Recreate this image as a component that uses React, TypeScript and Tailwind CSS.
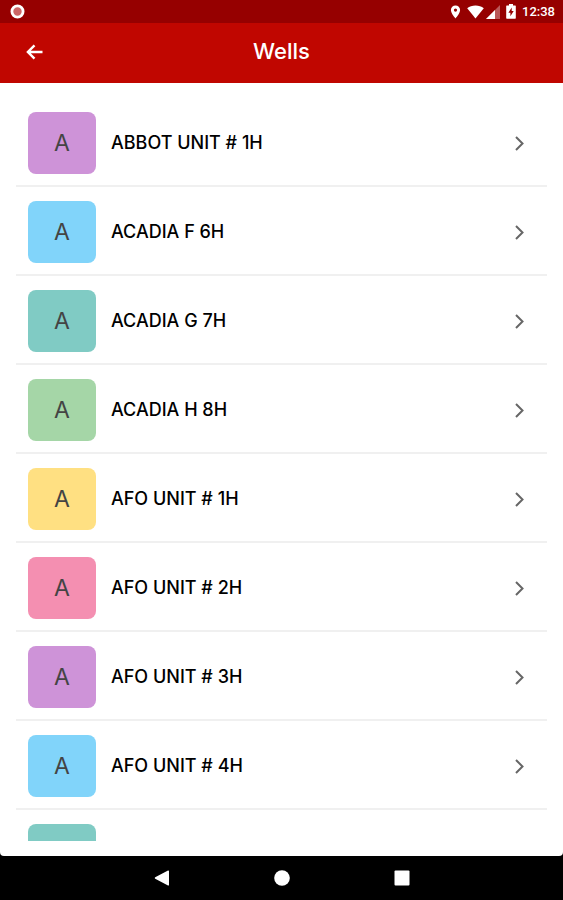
import React from "react";

const wells = [
  { name: "ABBOT UNIT # 1H", color: "bg-[#ce93d8]" },
  { name: "ACADIA F 6H", color: "bg-[#81d4fa]" },
  { name: "ACADIA G 7H", color: "bg-[#80cbc4]" },
  { name: "ACADIA H 8H", color: "bg-[#a5d6a7]" },
  { name: "AFO UNIT # 1H", color: "bg-[#ffe082]" },
  { name: "AFO UNIT # 2H", color: "bg-[#f48fb1]" },
  { name: "AFO UNIT # 3H", color: "bg-[#ce93d8]" },
  { name: "AFO UNIT # 4H", color: "bg-[#81d4fa]" },
  { name: "", color: "bg-[#80cbc4]" },
];

// --- STATUS BAR ---
const StatusBar = () => (
  <div className="flex h-[23px] shrink-0 items-center justify-between bg-[#960000] pr-2 pl-2.5 text-white">
    <svg width="15" height="15" viewBox="0 0 15 15" aria-hidden="true">
      <circle cx="7.5" cy="7.5" r="5.6" fill="#c66" stroke="#fff" strokeWidth="2.8" />
    </svg>
    <div className="flex items-center">
      <svg className="mr-1.5" width="11" height="14" viewBox="0 0 11 14" fill="currentColor" aria-hidden="true">
        <path fillRule="evenodd" d="M5.5.5A4.600 4.600 0 0 0 .9 5.100C.9 8.500 5.500 13.500 5.500 13.500S10.100 8.500 10.100 5.100A4.600 4.600 0 0 0 5.500.5ZM5.500 3.500A1.600 1.600 0 1 1 5.500 6.700A1.600 1.600 0 0 1 5.500 3.500Z" />
      </svg>
      <svg width="17" height="14" viewBox="0 0 17 14" fill="currentColor" aria-hidden="true">
        <path d="M8.500 13.500L.2 3.200C2.400 1.300 5.300.4 8.500.4s6.100.9 8.300 2.800Z" />
      </svg>
      <svg className="mr-1.5 ml-0.5" width="14" height="14" viewBox="0 0 14 14" fill="currentColor" aria-hidden="true">
        <path opacity=".35" d="M14 0v14H0Z" />
        <path d="M9 5v9H0Z" />
      </svg>
      <svg className="mr-1.5" width="10" height="15" viewBox="0 0 10 15" aria-hidden="true">
        <path fill="currentColor" d="M3 0h4v1.500h2.200a.6.600 0 0 1 .6.600v12a.6.600 0 0 1-.6.600H.8a.6.600 0 0 1-.6-.6v-12a.6.600 0 0 1 .6-.6H3Z" />
        <path fill="#960000" d="M5.700 3.500L2.400 8.700h2v3.600l3.300-5.200h-2Z" />
      </svg>
      <span className="font-['Roboto',sans-serif] text-[13px] leading-4 font-medium">12:38</span>
    </div>
  </div>
);

// --- HEADER ---
const Header = () => (
  <header className="grid h-[60px] shrink-0 grid-cols-[68px_1fr_68px] items-center bg-[#c00600] pb-1 text-white">
    <button type="button" aria-label="Back" className="flex h-10 items-center pt-0.5 pl-[26px]">
      <svg width="17" height="16" viewBox="0 0 17 16" fill="none" stroke="currentColor" strokeWidth="2.4" aria-hidden="true">
        <path d="M16.500 8H2M8.500 1.300L1.900 8l6.600 6.700" />
      </svg>
    </button>
    <h1 className="text-center text-[22px] leading-8 font-medium">Wells</h1>
  </header>
);

// --- ONE WELL ---
const WellRow = ({ name, color }: { name: string; color: string }) => (
  <li className="border-b-2 border-[#f0f0f0]">
    <button type="button" aria-label={name || "Next well"} className="flex w-full items-center pt-3.5 pr-[23px] pb-[11px] pl-3 text-left">
      <span className={`flex h-[62px] w-[68px] shrink-0 items-center justify-center rounded-lg text-[23px] leading-8 text-[#444] ${color}`}>
        {name.charAt(0)}
      </span>
      <span className="ml-[15px] flex-1 text-lg leading-6 font-medium text-black">{name}</span>
      <svg width="10" height="16" viewBox="0 0 10 16" fill="none" stroke="#666" strokeWidth="2" aria-hidden="true">
        <path d="M2 2L8.500 8.500L2 15" />
      </svg>
    </button>
  </li>
);

// --- ANDROID NAVIGATION ---
const NavBar = () => (
  <nav className="flex h-11 shrink-0 items-center justify-center gap-[104px] bg-black text-white">
    <button type="button" aria-label="Back">
      <svg width="16" height="16" viewBox="0 0 16 16" fill="currentColor" aria-hidden="true">
        <path d="M14 .5a.8.800 0 0 1 1 .8v13.400a.8.800 0 0 1-1 .8L1.200 8.800a1 1 0 0 1 0-1.600Z" />
      </svg>
    </button>
    <button type="button" aria-label="Home">
      <svg width="16" height="16" viewBox="0 0 16 16" fill="currentColor" aria-hidden="true">
        <circle cx="8" cy="8" r="7.800" />
      </svg>
    </button>
    <button type="button" aria-label="Recent apps">
      <svg width="16" height="16" viewBox="0 0 16 16" fill="currentColor" aria-hidden="true">
        <rect x=".5" y=".5" width="15" height="15" rx="1" />
      </svg>
    </button>
  </nav>
);

const App = () => {
  return (
    <div className="flex h-screen flex-col bg-black font-['Inter',sans-serif]">
      <StatusBar />
      <Header />
      <main className="flex min-h-0 flex-1 flex-col rounded-b-sm bg-white px-4 pt-[15px] pb-[15px]">
        <ul className="min-h-0 flex-1 overflow-hidden">
          {wells.map((well, index) => (
            <WellRow key={index} name={well.name} color={well.color} />
          ))}
        </ul>
      </main>
      <NavBar />
    </div>
  );
};

export default App;
